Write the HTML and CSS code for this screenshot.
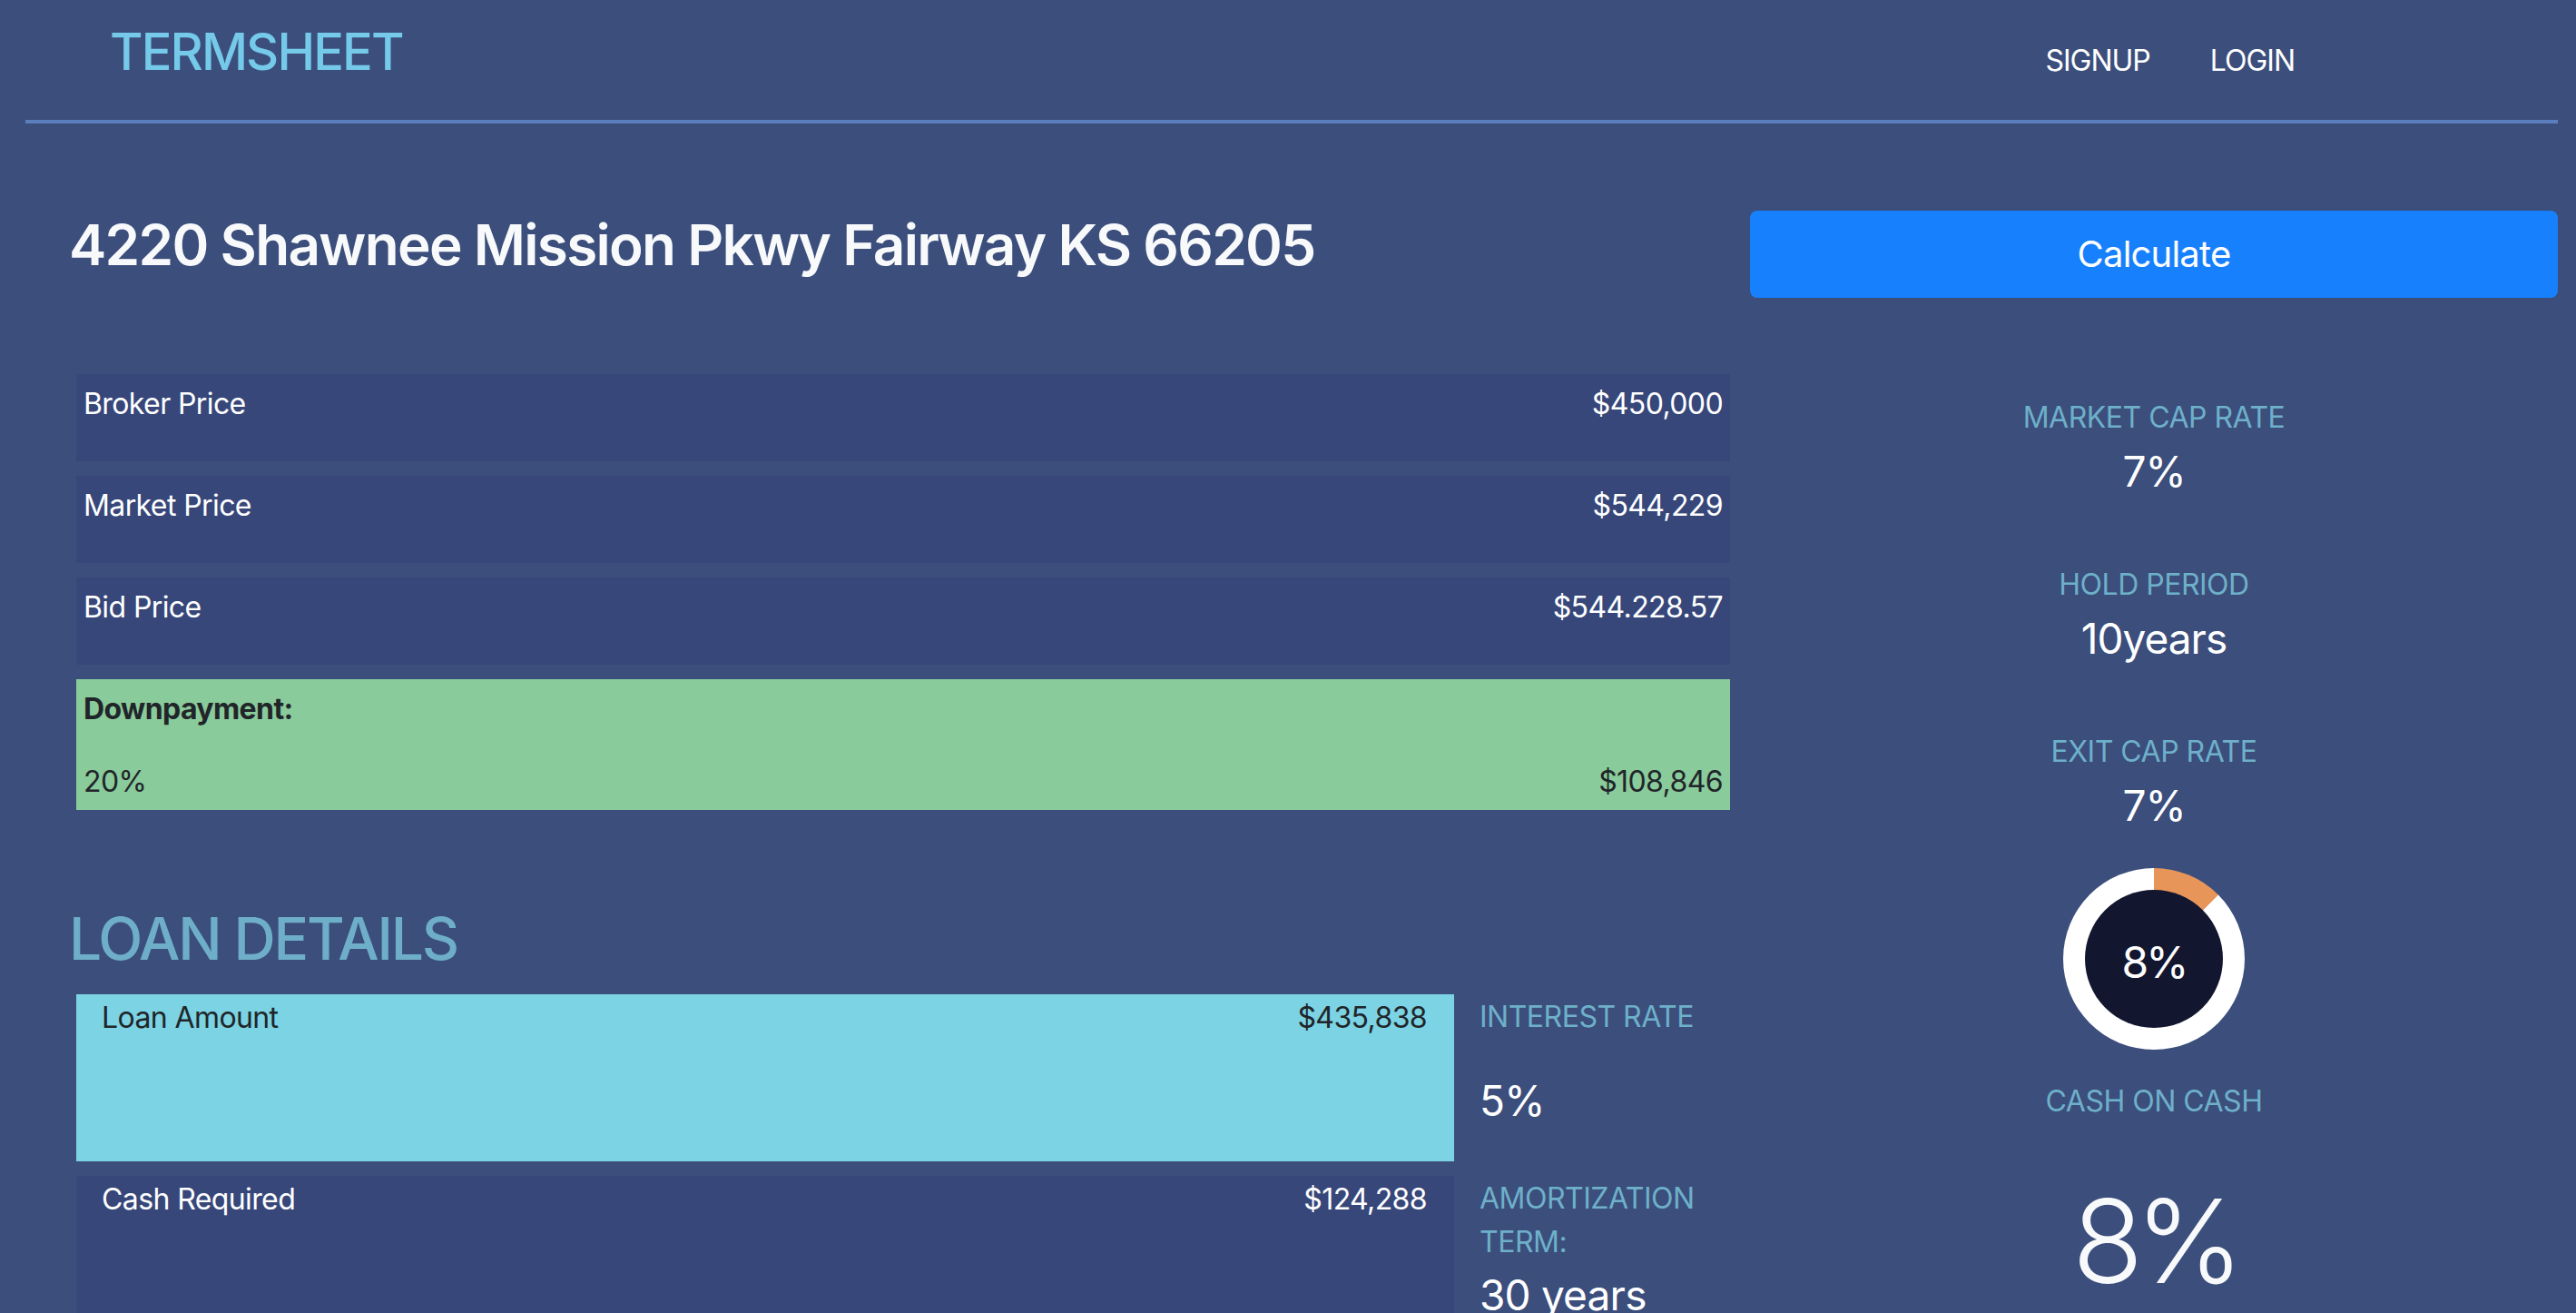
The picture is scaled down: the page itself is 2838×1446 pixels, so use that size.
FILE: index.html
```html
<!DOCTYPE html>
<html lang="en">
<head>
<meta charset="utf-8">
<title>Termsheet</title>
<link rel="stylesheet" href="styles.css">
</head>
<body>
<div class="page">
  <header class="topbar">
    <div class="brand">TERMSHEET</div>
    <nav class="nav">
      <a class="nav-link" href="#">SIGNUP</a>
      <a class="nav-link" href="#">LOGIN</a>
    </nav>
  </header>
  <hr class="divider">
  <main class="layout">
    <section class="main-col">
      <h1 class="address">4220 Shawnee Mission Pkwy Fairway KS 66205</h1>
      <div class="price-list">
        <div class="price-row"><span>Broker Price</span><span>$450,000</span></div>
        <div class="price-row"><span>Market Price</span><span>$544,229</span></div>
        <div class="price-row"><span>Bid Price</span><span>$544.228.57</span></div>
        <div class="down-row">
          <p class="down-title">Downpayment:</p>
          <div class="down-values"><span>20%</span><span>$108,846</span></div>
        </div>
      </div>
      <h2 class="section-title">LOAN DETAILS</h2>
      <div class="loan-grid">
        <div class="loan-box loan-box--cyan"><span>Loan Amount</span><span>$435,838</span></div>
        <div class="loan-stat">
          <div class="loan-label">INTEREST RATE</div>
          <div class="loan-value loan-value--spaced">5%</div>
        </div>
        <div class="loan-box"><span>Cash Required</span><span>$124,288</span></div>
        <div class="loan-stat">
          <div class="loan-label">AMORTIZATION TERM:</div>
          <div class="loan-value">30 years</div>
        </div>
      </div>
    </section>
    <aside class="side-col">
      <button class="calc-btn" type="button">Calculate</button>
      <div class="metric metric--first">
        <div class="metric-label">MARKET CAP RATE</div>
        <div class="metric-value">7%</div>
      </div>
      <div class="metric">
        <div class="metric-label">HOLD PERIOD</div>
        <div class="metric-value">10years</div>
      </div>
      <div class="metric">
        <div class="metric-label">EXIT CAP RATE</div>
        <div class="metric-value">7%</div>
      </div>
      <div class="donut">
        <div class="donut-inner"><span class="donut-text">8%</span></div>
      </div>
      <div class="metric-label cash-label">CASH ON CASH</div>
      <div class="big-value">8%</div>
    </aside>
  </main>
</div>
</body>
</html>
```
FILE: styles.css
```css
* { box-sizing: border-box; }

html, body {
  margin: 0;
  padding: 0;
  background: #3b4e7c;
  font-family: "Inter", "Liberation Sans", sans-serif;
  color: #ffffff;
}

.page {
  padding: 0 20px 0 28px;
}

.topbar {
  height: 132px;
  display: flex;
  justify-content: space-between;
  align-items: flex-start;
}

.brand {
  margin: 29px 0 0 93px;
  font-size: 56px;
  line-height: 1;
  font-weight: 500;
  color: #75c9e9;
  letter-spacing: -1.9px;
}

.nav {
  display: flex;
  gap: 66px;
  margin: 51px 290px 0 0;
}

.nav-link {
  color: #ffffff;
  text-decoration: none;
  font-size: 32px;
  line-height: 1;
  letter-spacing: -1px;
}

.divider {
  margin: 0;
  border: 0;
  border-top: 4px solid #5b7fbd;
  height: 0;
}

.layout {
  display: grid;
  grid-template-columns: 1878px 890px;
  column-gap: 22px;
  padding-top: 96px;
}

.main-col {
  padding-left: 48px;
}

.address {
  margin: 1px 0 0;
  font-size: 62px;
  line-height: 1.2;
  font-weight: 600;
  color: #f8f9fb;
  letter-spacing: -1.7px;
}

.price-list {
  margin: 105px 0 0 8px;
  display: flex;
  flex-direction: column;
  gap: 16px;
}

.price-row {
  height: 96px;
  background: #37477a;
  display: flex;
  justify-content: space-between;
  align-items: flex-start;
  padding: 9px 8px 0;
  font-size: 32px;
  line-height: 48px;
  letter-spacing: -0.6px;
}

.down-row {
  background: #89cb9b;
  color: #212529;
  padding: 9px 8px 7px;
  font-size: 32px;
  line-height: 48px;
  letter-spacing: -0.6px;
}

.down-title {
  margin: 0 0 32px;
  font-weight: 700;
}

.down-values {
  display: flex;
  justify-content: space-between;
}

.section-title {
  margin: 104px 0 0;
  font-size: 64px;
  line-height: 1.2;
  font-weight: 500;
  color: #6eaec8;
  letter-spacing: -2.1px;
}

.loan-grid {
  margin: 22px 0 0 8px;
  display: grid;
  grid-template-columns: 1518px 1fr;
  column-gap: 28px;
  row-gap: 16px;
}

.loan-box {
  height: 184px;
  background: #37477a;
  display: flex;
  justify-content: space-between;
  align-items: flex-start;
  padding: 2px 30px 0 28px;
  font-size: 32px;
  line-height: 48px;
  letter-spacing: -0.6px;
}

.loan-box--cyan {
  background: #7bd3e3;
  color: #212529;
}

.loan-stat {
  padding-top: 1px;
}

.loan-label {
  font-size: 32px;
  line-height: 48px;
  color: #6eb0c9;
  letter-spacing: -0.5px;
}

.loan-value {
  font-size: 46px;
  line-height: 1.5;
  color: #ffffff;
  letter-spacing: -0.8px;
}

.loan-value--spaced {
  margin-top: 34px;
}

.side-col {
  display: flex;
  flex-direction: column;
  align-items: center;
}

.calc-btn {
  width: 100%;
  height: 96px;
  border: 0;
  border-radius: 8px;
  background: #1780fc;
  color: #ffffff;
  font-family: inherit;
  font-size: 40px;
  line-height: 1;
  letter-spacing: -0.8px;
  display: flex;
  align-items: center;
  justify-content: center;
}

.metric {
  margin-top: 73px;
  display: flex;
  flex-direction: column;
  align-items: center;
}

.metric--first {
  margin-top: 108px;
}

.metric-label {
  font-size: 32px;
  line-height: 48px;
  color: #6eb0c9;
  letter-spacing: -0.5px;
}

.metric-value {
  margin-top: 8px;
  font-size: 46px;
  line-height: 1.2;
  color: #ffffff;
  letter-spacing: -1px;
}

.donut {
  margin-top: 40px;
  width: 200px;
  height: 200px;
  border-radius: 50%;
  background: conic-gradient(#e8955a 0deg 45deg, #ffffff 45deg 360deg);
  display: flex;
  align-items: center;
  justify-content: center;
}

.donut-inner {
  width: 152px;
  height: 152px;
  border-radius: 50%;
  background: #12162f;
  display: flex;
  align-items: center;
  justify-content: center;
}

.donut-text {
  margin-top: 9px;
  font-size: 48px;
  line-height: 1;
  color: #ffffff;
  letter-spacing: -3px;
}

.cash-label {
  margin-top: 33px;
}

.big-value {
  margin-top: 66px;
  font-size: 128px;
  line-height: 1;
  font-weight: 300;
  color: #f8f9fb;
  letter-spacing: -9px;
}
```
